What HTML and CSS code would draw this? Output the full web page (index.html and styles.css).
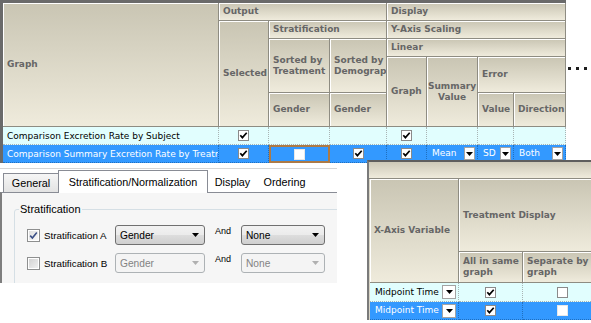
FILE: index.html
```html
<!DOCTYPE html>
<html>
<head>
<meta charset="utf-8">
<link rel="stylesheet" href="styles.css">
</head>
<body>
<div class="page">
  <div class="top">
    <div class="grid">
      <div class="h a-graph">Graph</div>
      <div class="h a-output">Output</div>
      <div class="h a-display">Display</div>
      <div class="h a-selected">Selected</div>
      <div class="h a-strat">Stratification</div>
      <div class="h a-yaxis">Y-Axis Scaling</div>
      <div class="h a-sbt">Sorted by<br>Treatment</div>
      <div class="h a-sbd">Sorted by<br>Demograp</div>
      <div class="h a-linear">Linear</div>
      <div class="h a-dgraph">Graph</div>
      <div class="h a-summary">Summary<br>Value</div>
      <div class="h a-error">Error</div>
      <div class="h a-g1">Gender</div>
      <div class="h a-g2">Gender</div>
      <div class="h a-value">Value</div>
      <div class="h a-dir">Direction</div>

      <div class="d r1 txt">Comparison Excretion Rate by Subject</div>
      <div class="d r1 ctr"><svg class="cb" width="11" height="11" viewBox="0 0 11 11"><rect x="0.5" y="0.5" width="10" height="10" fill="#fff" stroke="#8a8a8a"/><path d="M2.3 5.2 L4.4 7.6 L8.7 2.8" fill="none" stroke="#000" stroke-width="1.7"/></svg></div>
      <div class="d r1"></div>
      <div class="d r1"></div>
      <div class="d r1 ctr"><svg class="cb" width="11" height="11" viewBox="0 0 11 11"><rect x="0.5" y="0.5" width="10" height="10" fill="#fff" stroke="#8a8a8a"/><path d="M2.3 5.2 L4.4 7.6 L8.7 2.8" fill="none" stroke="#000" stroke-width="1.7"/></svg></div>
      <div class="d r1"></div>
      <div class="d r1"></div>
      <div class="d r1"></div>

      <div class="d r2 txt">Comparison Summary Excretion Rate by Treatment</div>
      <div class="d r2 ctr"><svg class="cb" width="11" height="11" viewBox="0 0 11 11"><rect x="0.5" y="0.5" width="10" height="10" fill="#fff" stroke="#8a8a8a"/><path d="M2.3 5.2 L4.4 7.6 L8.7 2.8" fill="none" stroke="#000" stroke-width="1.7"/></svg></div>
      <div class="d r2 ctr focus"><svg class="cb" width="11" height="11" viewBox="0 0 11 11"><rect x="0.5" y="0.5" width="10" height="10" fill="#fff" stroke="#e8e8e8"/></svg></div>
      <div class="d r2 ctr"><svg class="cb" width="11" height="11" viewBox="0 0 11 11"><rect x="0.5" y="0.5" width="10" height="10" fill="#fff" stroke="#8a8a8a"/><path d="M2.3 5.2 L4.4 7.6 L8.7 2.8" fill="none" stroke="#000" stroke-width="1.7"/></svg></div>
      <div class="d r2 ctr"><svg class="cb" width="11" height="11" viewBox="0 0 11 11"><rect x="0.5" y="0.5" width="10" height="10" fill="#fff" stroke="#8a8a8a"/><path d="M2.3 5.2 L4.4 7.6 L8.7 2.8" fill="none" stroke="#000" stroke-width="1.7"/></svg></div>
      <div class="d r2 combo-cell"><span class="ctext">Mean</span><span class="dd"><svg width="7" height="4" viewBox="0 0 7 4"><path d="M0 0H7L3.5 4Z" fill="#000"/></svg></span></div>
      <div class="d r2 combo-cell"><span class="ctext">SD</span><span class="dd"><svg width="7" height="4" viewBox="0 0 7 4"><path d="M0 0H7L3.5 4Z" fill="#000"/></svg></span></div>
      <div class="d r2 combo-cell"><span class="ctext">Both</span><span class="dd"><svg width="7" height="4" viewBox="0 0 7 4"><path d="M0 0H7L3.5 4Z" fill="#000"/></svg></span></div>
    </div>
    <div class="dots"><i></i><i></i><i></i></div>
  </div>

  <div class="lower">
    <div class="dialog">
      <div class="tabs">
        <div class="tab t-general">General</div>
        <div class="tab sel">Stratification/Normalization</div>
        <div class="tab flat t-display">Display</div>
        <div class="tab flat t-ordering">Ordering</div>
      </div>
      <div class="tabbody">
        <fieldset class="group">
          <legend>Stratification</legend>
          <div class="frow">
            <span class="wcb"><svg width="9" height="9" viewBox="0 0 9 9"><path d="M1.2 4.6 L3.4 7 L7.8 1.6" fill="none" stroke="#3b4f86" stroke-width="1.6"/></svg></span>
            <span class="flabel">Stratification A</span>
            <span class="combo c1"><span>Gender</span><svg width="7" height="4" viewBox="0 0 7 4"><path d="M0 0H7L3.5 4Z" fill="#000"/></svg></span>
            <span class="and">And</span>
            <span class="combo c2"><span>None</span><svg width="7" height="4" viewBox="0 0 7 4"><path d="M0 0H7L3.5 4Z" fill="#000"/></svg></span>
          </div>
          <div class="frow dis">
            <span class="wcb"></span>
            <span class="flabel">Stratification B</span>
            <span class="combo c1"><span>Gender</span><svg width="7" height="4" viewBox="0 0 7 4"><path d="M0 0H7L3.5 4Z" fill="#b0b0b0"/></svg></span>
            <span class="and">And</span>
            <span class="combo c2"><span>None</span><svg width="7" height="4" viewBox="0 0 7 4"><path d="M0 0H7L3.5 4Z" fill="#b0b0b0"/></svg></span>
          </div>
        </fieldset>
      </div>
    </div>

    <div class="xpanel">
      <div class="xband"></div>
      <div class="xgrid">
        <div class="h x-var">X-Axis Variable</div>
        <div class="h x-td">Treatment Display</div>
        <div class="h x-all">All in same<br>graph</div>
        <div class="h x-sep">Separate by<br>graph</div>

        <div class="d r1 xcombo"><span class="ctext">Midpoint Time</span><span class="dd big"><svg width="7" height="4" viewBox="0 0 7 4"><path d="M0 0H7L3.5 4Z" fill="#000"/></svg></span></div>
        <div class="d r1 ctr"><svg class="cb" width="11" height="11" viewBox="0 0 11 11"><rect x="0.5" y="0.5" width="10" height="10" fill="#fff" stroke="#8a8a8a"/><path d="M2.3 5.2 L4.4 7.6 L8.7 2.8" fill="none" stroke="#000" stroke-width="1.7"/></svg></div>
        <div class="d r1 ctr"><svg class="cb" width="11" height="11" viewBox="0 0 11 11"><rect x="0.5" y="0.5" width="10" height="10" fill="#fff" stroke="#8a8a8a"/></svg></div>

        <div class="d r2 xcombo"><span class="ctext">Midpoint Time</span><span class="dd big"><svg width="7" height="4" viewBox="0 0 7 4"><path d="M0 0H7L3.5 4Z" fill="#000"/></svg></span></div>
        <div class="d r2 ctr"><svg class="cb" width="11" height="11" viewBox="0 0 11 11"><rect x="0.5" y="0.5" width="10" height="10" fill="#fff" stroke="#8a8a8a"/><path d="M2.3 5.2 L4.4 7.6 L8.7 2.8" fill="none" stroke="#000" stroke-width="1.7"/></svg></div>
        <div class="d r2 ctr"><svg class="cb" width="11" height="11" viewBox="0 0 11 11"><rect x="0.5" y="0.5" width="10" height="10" fill="#fff" stroke="#e8e8e8"/></svg></div>
      </div>
    </div>
  </div>
</div>
</body>
</html>
```

FILE: styles.css
```css
* { box-sizing: border-box; margin: 0; padding: 0; }
html, body { background: #fff; }
body {
  width: 591px;
  height: 323px;
  overflow: hidden;
  font-family: "DejaVu Sans", Verdana, sans-serif;
  font-size: 9px;
}
.page { display: flex; flex-direction: column; }
.top { display: flex; align-items: flex-start; }

.grid {
  display: grid;
  grid-template-columns: 216px 50px 61px 57px 40px 51px 36px 52px;
  grid-template-rows: 18px 18px 18px 36px 34px 18px 18px;
  border-top: 3px solid #6a6a6a;
  border-left: 3px solid #6a6a6a;
}

.h {
  background: linear-gradient(#c9c5b3, #efebdc);
  border-right: 1px solid #8e8c82;
  border-bottom: 1px solid #8e8c82;
  box-shadow: inset 1px 1px 0 #fff;
  color: #666;
  font-weight: bold;
  display: flex;
  align-items: center;
  padding-left: 4px;
  line-height: 11px;
  white-space: nowrap;
  overflow: hidden;
}

.a-graph { grid-column: 1; grid-row: 1 / 6; }
.a-output { grid-column: 2 / 5; grid-row: 1; }
.a-display { grid-column: 5 / 9; grid-row: 1; }
.a-selected { grid-column: 2; grid-row: 2 / 6; }
.a-strat { grid-column: 3 / 5; grid-row: 2; }
.a-yaxis { grid-column: 5 / 9; grid-row: 2; }
.a-sbt { grid-column: 3; grid-row: 3 / 5; }
.a-sbd { grid-column: 4; grid-row: 3 / 5; }
.a-linear { grid-column: 5 / 9; grid-row: 3; }
.a-dgraph { grid-column: 5; grid-row: 4 / 6; }
.a-summary { grid-column: 6; grid-row: 4 / 6; justify-content: center; text-align: center; padding-left: 0; }
.a-error { grid-column: 7 / 9; grid-row: 4; }
.a-g1 { grid-column: 3; grid-row: 5; }
.a-g2 { grid-column: 4; grid-row: 5; }
.a-value { grid-column: 7; grid-row: 5; }
.a-dir { grid-column: 8; grid-row: 5; }

.d {
  display: flex;
  align-items: center;
  border-right: 1px dotted #a9b4b4;
  border-bottom: 1px dotted #a9b4b4;
  white-space: nowrap;
  overflow: hidden;
}
.r1 { background: #e1fefe; color: #000; }
.r2 { background: #3399ff; color: #fff; border-right-color: #1f6fbf; border-bottom-color: #1f6fbf; }
.txt { padding-left: 4px; }
.ctr { justify-content: center; }
.cb { display: block; }
.focus { border: 2px solid #ad7a45; }

.combo-cell { padding-left: 5px; justify-content: space-between; padding-right: 2px; }
.ctext { line-height: 11px; }
.dd {
  width: 11px;
  height: 13px;
  background: #fff;
  border: 1px solid #a3a3a3;
  display: flex;
  align-items: center;
  justify-content: center;
}
.dd.big { width: 14px; height: 14px; }

.dots { display: flex; gap: 5px; margin-top: 67px; margin-left: 2px; }
.dots i { width: 3px; height: 3px; background: #1e1e1e; }

.lower { display: flex; align-items: flex-start; margin-top: -3px; }

.dialog {
  width: 337px;
  height: 115px;
  margin-top: 8px;
  overflow: hidden;
  border-top: 1px solid #d6d6d6;
  font-family: "Liberation Sans", Arial, sans-serif;
  color: #000;
}
.tabs { display: flex; align-items: flex-end; height: 23px; padding-left: 3px; }
.tab {
  height: 19px;
  border: 1px solid #898c95;
  border-bottom: none;
  background: linear-gradient(#f6f6f6, #e3e3e3);
  font-size: 10.8px;
  line-height: 18px;
  text-align: center;
}
.t-general { width: 56px; }
.tab.sel {
  width: 150px;
  height: 23px;
  margin-left: -1px;
  margin-bottom: -1px;
  background: #fff;
  line-height: 22px;
}
.tab.flat { border: none; background: #fff; }
.t-display { width: 49px; border-right: 1px solid #cfcfcf; height: 14px; line-height: 14px; margin-bottom: 3px; }
.t-ordering { width: 55px; height: 14px; line-height: 14px; margin-bottom: 3px; }

.tabbody {
  height: 91px;
  border-top: 1px solid #898c95;
  border-left: 2px solid #7e7e7e;
  background: #f6f6f6;
  padding: 10px 0 0 12px;
}
.group {
  width: 360px;
  height: 120px;
  border: 1px solid #d5dfe5;
  border-radius: 3px;
  padding: 0 0 0 4px;
}
.group legend { font-size: 11px; padding: 0 1px; line-height: 13px; }
.frow { display: flex; align-items: center; height: 20px; margin: 9px 0 0 8px; }
.frow + .frow { margin-top: 8px; }
.wcb {
  width: 13px;
  height: 13px;
  border: 1px solid #8e8f8f;
  background: linear-gradient(135deg, #dcdcdc, #fbfbfb);
  box-shadow: inset 0 0 0 1px #fff;
  display: flex;
  align-items: center;
  justify-content: center;
}
.frow.dis .wcb { background: linear-gradient(135deg, #cfcfcf, #f3f3f3); }
.flabel { width: 75px; padding-left: 4px; font-size: 9.8px; }
.combo {
  height: 20px;
  border: 1px solid #707070;
  border-radius: 3px;
  background: linear-gradient(#f2f2f2 0%, #ebebeb 50%, #dddddd 51%, #cfcfcf 100%);
  display: flex;
  align-items: center;
  justify-content: space-between;
  padding: 0 5px 0 4px;
  font-size: 10.2px;
}
.c1 { width: 90px; }
.c2 { width: 84px; }
.and { padding-left: 10px; margin-right: 10px; font-size: 9px; align-self: flex-start; line-height: 12px; }
.frow.dis .combo { border-color: #adb2b5; background: #f4f4f4; color: #838383; }

.xpanel {
  width: 224px;
  height: 160px;
  margin-left: 30px;
  border-top: 2px solid #5e5e5e;
  border-left: 2px solid #7a7a7a;
  background: #d9d5c6;
  display: flex;
  flex-direction: column;
}
.xband {
  height: 17px;
  background: linear-gradient(#cdc9b8, #efebdc);
  border-bottom: 1px solid #8e8c82;
}
.xgrid {
  display: grid;
  grid-template-columns: 89px 64px 80px;
  grid-template-rows: 73px 31px 19px 18px;
  margin-left: 1px;
}
.x-var { grid-column: 1; grid-row: 1 / 3; }
.x-td { grid-column: 2 / 4; grid-row: 1; }
.x-all { grid-column: 2; grid-row: 2; }
.x-sep { grid-column: 3; grid-row: 2; }
.xcombo { padding-left: 5px; padding-right: 2px; justify-content: space-between; }
```
